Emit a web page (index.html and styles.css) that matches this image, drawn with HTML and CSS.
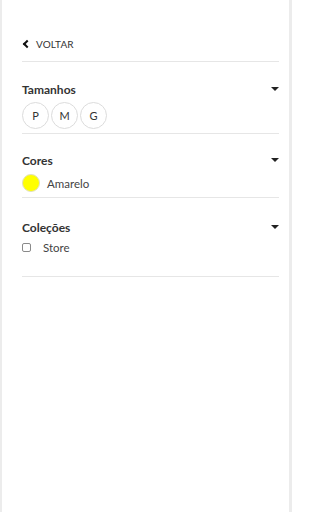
FILE: index.html
```html
<!DOCTYPE html>
<html lang="pt">
<head>
<meta charset="utf-8">
<link rel="stylesheet" href="styles.css">
</head>
<body>
<div class="panel">
  <div class="back"><span class="chev"></span><span class="back-label">VOLTAR</span></div>
  <div class="section s1">
    <div class="head"><span class="title">Tamanhos</span><span class="caret"></span></div>
    <div class="sizes">
      <span class="size">P</span><span class="size">M</span><span class="size">G</span>
    </div>
  </div>
  <div class="section s2">
    <div class="head"><span class="title">Cores</span><span class="caret"></span></div>
    <div class="color-row"><span class="swatch"></span><span class="label">Amarelo</span></div>
  </div>
  <div class="section s3">
    <div class="head"><span class="title">Coleções</span><span class="caret"></span></div>
    <div class="check-row"><span class="box"></span><span class="label">Store</span></div>
  </div>
</div>
</body>
</html>
```
FILE: styles.css
```css
html, body { margin: 0; padding: 0; background: #fff; }
body { font-family: Lato, "Open Sans", sans-serif; color: #333; }
.panel {
  box-sizing: border-box;
  width: 292px;
  height: 512px;
  border-left: 2px solid #ececec;
  border-right: 3px solid #ececec;
  padding: 0 10px 0 20px;
}
.back {
  display: flex;
  align-items: center;
  gap: 6px;
  height: 16px;
  padding-top: 36px;
  padding-bottom: 9px;
  border-bottom: 1px solid #e6e6e6;
}
.chev {
  width: 4px; height: 4px;
  border-left: 2px solid #111;
  border-bottom: 2px solid #111;
  transform: rotate(45deg);
  margin-left: 2px;
}
.back-label { font-size: 10px; letter-spacing: 0.1px; color: #333; }
.section { border-bottom: 1px solid #e6e6e6; }
.s1 { padding: 19px 0 4px; }
.s2 { padding: 18px 0 5px; }
.s3 { padding: 21px 0 21px; }
.head { display: flex; align-items: center; justify-content: space-between; height: 16px; }
.title { font-size: 12px; font-weight: 700; color: #333; }
.caret {
  width: 0; height: 0;
  border-left: 4px solid transparent;
  border-right: 4px solid transparent;
  border-top: 4px solid #222;
  margin-right: 0;
}
.sizes { display: flex; gap: 2px; margin-top: 5px; }
.size {
  box-sizing: border-box;
  width: 27px; height: 27px;
  border: 1px solid #dcdcdc;
  border-radius: 50%;
  display: flex; align-items: center; justify-content: center;
  font-size: 11px; color: #333;
}
.color-row { display: flex; align-items: center; gap: 7px; margin-top: 6px; height: 18px; }
.swatch {
  box-sizing: border-box;
  width: 18px; height: 18px;
  border-radius: 50%;
  background: #ffff00;
  border: 1px solid #e0e0c0;
}
.label { font-size: 11.5px; color: #444; }
.check-row { display: flex; align-items: center; gap: 12px; margin-top: 4px; height: 16px; }
.box {
  box-sizing: border-box;
  width: 9px; height: 9px;
  border: 1px solid #8a8a8a;
  border-radius: 2px;
}
```
